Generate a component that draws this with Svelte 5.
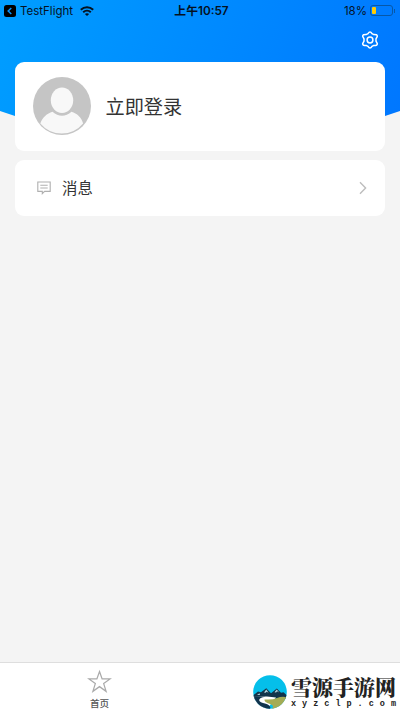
<script>
  let status = {back: "TestFlight", time: "上午10:57", battery: 18};
  let rows = [{title: "消息"}];
  let tabs = [{title: "首页"}];
</script>

<div class="screen">
  <header>
    <div class="status">
      <div class="left">
        <svg class="back" viewBox="0 0 12 12"><rect width="12" height="12" rx="2.5"/><path d="M7.3 3 4.2 6l3.1 3" fill="none" stroke="#0796ff" stroke-width="1.5"/></svg>
        <span>{status.back}</span>
        <svg class="wifi" viewBox="0 0 14 10" fill="none" stroke="#05121f" stroke-width="2">
          <path d="M.8 3.7C4.4.4 9.6.4 13.2 3.7M3.2 6.2c2.2-2 5.4-2 7.6 0"/>
          <path d="M4.9 7.9c1.2-1 3-1 4.2 0L7 10z" fill="#05121f" stroke="none"/>
        </svg>
      </div>
      <div class="time">{status.time}</div>
      <div class="right">
        <span>{status.battery}%</span>
        <div class="battery"><i style="width: {status.battery * 1.2}%"></i></div>
        <b></b>
      </div>
    </div>
    <div class="tools">
      <svg viewBox="0 0 18 18" fill="none" stroke="white" stroke-width="1.5" stroke-linejoin="round">
        <path d="M7 2.6Q9-.8 11 2.6L12.4 3.4Q16.5 3.2 16.3 5.3L15 7.9V10.1L16.3 12.7Q16.5 14.8 12.4 14.6L11 15.4Q9 18.8 7 15.4L5.6 14.6Q1.5 14.8 1.7 12.7L3 10.1V7.9L1.7 5.3Q1.5 3.2 5.6 3.4Z"/>
        <circle cx="9" cy="9" r="2.9"/>
      </svg>
    </div>
  </header>

  <main>
    <section class="card profile">
      <svg viewBox="0 0 58 58">
        <circle cx="29" cy="29" r="29" fill="#c5c5c5"/>
        <ellipse cx="29" cy="23.2" rx="11.2" ry="12.8" fill="#f8f8f8"/>
        <path d="M7.3 46.5C9.5 40.5 14 36.5 19.5 34.8 25.5 40 32.5 40 38.5 34.8 44 36.5 48.5 40.5 50.1 46.5A27.8 27.8 0 0 1 7.3 46.5Z" fill="#f8f8f8"/>
      </svg>
      <h1>立即登录</h1>
    </section>

    {#each rows as row}
      <section class="card row">
        <svg class="message" viewBox="0 0 14 14" fill="none" stroke="#b0b0b0" stroke-width="1.1">
          <path d="M.8 1h12.4v9.4H7.6L5.3 12.6V10.4H.8zM3.3 4.2h7.4M3.3 7h7.4"/>
        </svg>
        <h2>{row.title}</h2>
        <svg class="arrow" viewBox="0 0 8 14" fill="none" stroke="#bdbdbd" stroke-width="1.4"><path d="m1 1.3 5.6 5.7L1 12.7"/></svg>
      </section>
    {/each}
  </main>

  <nav>
    {#each tabs as tab}
      <div class="tab">
        <svg viewBox="0 0 22 22" fill="none" stroke="#aaa" stroke-width="1.2">
          <path d="m11 1.5 2.5 7h7.6L15 13l2.3 7.4L11 15.9l-6.3 4.5L7 13 .9 8.5h7.6z"/>
        </svg>
        <span>{tab.title}</span>
      </div>
    {/each}
    <div class="site">
      <svg viewBox="0 0 34 34">
        <defs><clipPath id="round"><circle cx="17" cy="17" r="16.8"/></clipPath></defs>
        <g clip-path="url(#round)">
          <rect width="34" height="34" fill="#05bfea"/>
          <path d="M0 20.5 5 16.5l3 .8 5.3-4 4.7 4.9 5.8-4.7 4.2 4.3 2.5-.5L34 20.5v3H0z" fill="#12344b"/>
          <path d="m11 17.4 2.3-3 2.3 3.3-2-1-1 1.1zM21.5 17.2l2.3-2.8 2.3 3-2-1.1-1 1.1zM4 20l2.5-1.7.5 1.8z" fill="#b9d6df"/>
          <path d="M0 21.8q7-.6 14-.3l9 .9L14 34H0z" fill="#fff"/>
          <path d="M0 21.3q6.5-.2 12.5.5-6.5 1-6.3 3.4.2 2.1 6.6 3.6Q18.5 30.5 17 34H0z" fill="#10344d"/>
          <path d="M11.5 24.4q8 .6 12.5-1.4 4.7-2 10-.8V34H18.5q3.7-3.3-1.5-5-6-2-5.5-4.6" fill="#a4ac54"/>
        </g>
      </svg>
      <div class="name">
        <strong>雪源手游网</strong>
        <small>xyzclp.com</small>
      </div>
    </div>
  </nav>
</div>

<style>
  :global(body) {
    margin: 0;
  }
  *, *::before {
    box-sizing: border-box;
  }
  svg {
    display: block;
    flex: none;
    overflow: visible;
  }
  h1, h2 {
    margin: 0;
    font-weight: 400;
  }
  .screen {
    position: relative;
    isolation: isolate;
    display: flex;
    flex-direction: column;
    width: 400px;
    height: 710px;
    overflow: hidden;
    background: #f4f4f4;
    color: #333;
    font-family: Inter, "Noto Sans CJK SC", sans-serif;
  }
  .screen::before {
    content: "";
    position: absolute;
    z-index: -1;
    inset: 0 0 auto;
    height: 146px;
    background: linear-gradient(110deg, #009eff, #0076ff);
    clip-path: polygon(0 0, 100% 0, 100% 111px, 385px 116px, 50% 146px, 15px 116px, 0 111px);
  }
  header {
    height: 62px;
  }
  .status {
    display: grid;
    grid-template-columns: 1fr auto 1fr;
    align-items: center;
    height: 21px;
    padding: 0 5px 0 4px;
    color: #05121f;
    font-size: 11.5px;
    line-height: 20px;
  }
  .left, .right {
    display: flex;
    align-items: center;
  }
  .left span {
    margin: 0 7px 0 4px;
    font-size: 11.5px;
  }
  .back {
    width: 12px;
    height: 12px;
  }
  .wifi {
    width: 14px;
    height: 10px;
  }
  .time {
    margin-left: 4px;
    font-size: 11.8px;
    font-weight: 600;
  }
  .right {
    justify-content: flex-end;
  }
  .battery {
    width: 23px;
    height: 11px;
    margin-left: 3px;
    padding: 1px;
    border: 1px solid #0758a8;
    border-radius: 3px;
  }
  .battery i {
    display: block;
    height: 7px;
    background: #ffcc05;
    border-radius: 1px;
  }
  .right b {
    width: 1px;
    height: 4px;
    margin-left: 1px;
    background: #0758a8;
  }
  .tools {
    display: flex;
    justify-content: flex-end;
    padding: 10px 21px 0;
  }
  .tools svg {
    width: 18px;
    height: 18px;
  }
  main {
    display: flex;
    flex: 1;
    flex-direction: column;
    gap: 9.5px;
    padding: 0 15px;
  }
  .card {
    display: flex;
    align-items: center;
    background: white;
    border-radius: 9px;
  }
  .profile {
    height: 88.5px;
    padding: 0 18px;
  }
  .profile svg {
    width: 58px;
    height: 58px;
  }
  h1 {
    margin-left: 14.5px;
    padding-top: 2px;
    font-size: 19.2px;
    line-height: 28px;
  }
  .row {
    height: 56px;
    padding: 0 18px 0 22px;
  }
  .message {
    width: 14px;
    height: 14px;
  }
  h2 {
    flex: 1;
    margin-left: 11px;
    padding-top: 2px;
    font-size: 15.4px;
    line-height: 24px;
  }
  .arrow {
    width: 8px;
    height: 14px;
  }
  nav {
    display: flex;
    height: 48px;
    background: white;
    border-top: 1px solid #dedede;
  }
  .tab {
    display: flex;
    flex: none;
    flex-direction: column;
    align-items: center;
    width: 199px;
    padding-top: 7px;
    color: #555;
    font-size: 9.6px;
    font-weight: 500;
    line-height: 14px;
  }
  .tab svg {
    width: 23px;
    height: 23px;
    margin-bottom: 4px;
  }
  .site {
    display: flex;
    flex: none;
    padding: 12px 0 0 54px;
  }
  .site svg {
    width: 34px;
    height: 34px;
  }
  .name {
    display: flex;
    flex-direction: column;
    margin-left: 4px;
    color: #222;
    white-space: nowrap;
  }
  strong {
    margin-top: -1px;
    font: 900 21px/24px "Noto Serif CJK SC", "Noto Sans CJK SC", serif;
  }
  small {
    margin-top: 2px;
    font: 700 8.5px/9px "Liberation Mono", monospace;
    letter-spacing: 6px;
  }
</style>
